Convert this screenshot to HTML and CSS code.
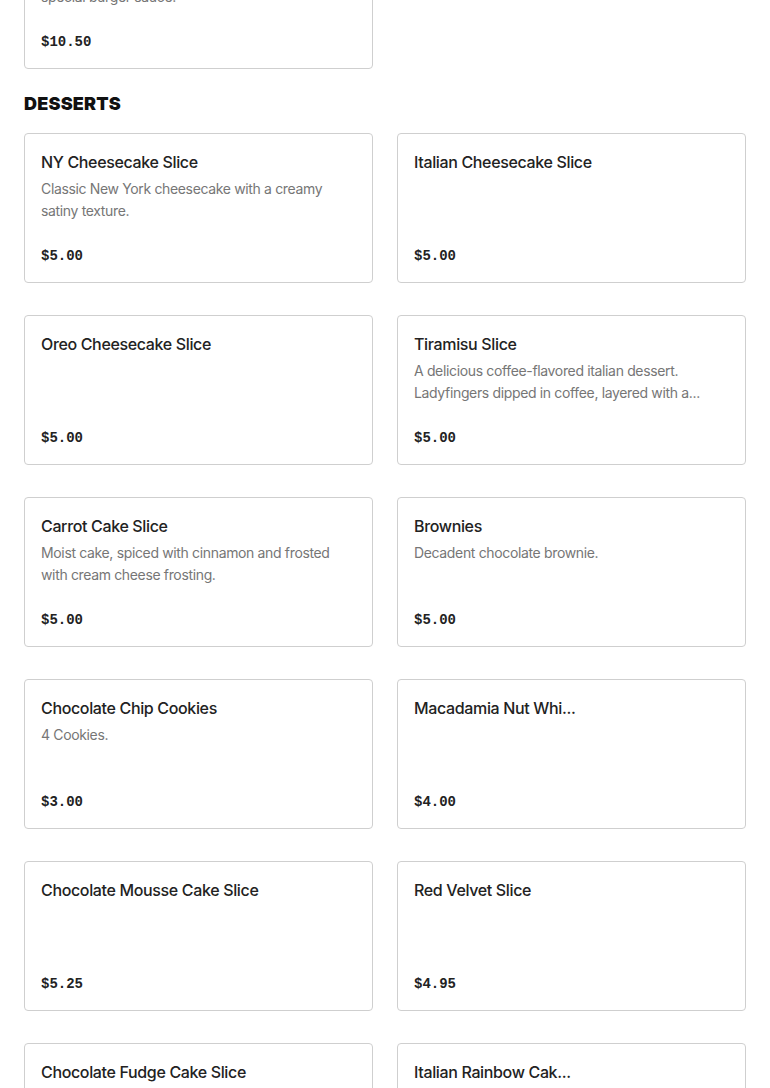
FILE: index.html
```html
<!DOCTYPE html>
<html lang="en">
<head>
<meta charset="utf-8">
<title>Menu</title>
<link rel="stylesheet" href="styles.css">
</head>
<body>
<main class="menu">
  <section class="section section-scrolled">
    <div class="grid">
      <article class="card">
        <h3 class="card-title">Classic Burger</h3>
        <p class="card-desc">Two beef patties, cheese, lettuce, pickles and special burger sauce.</p>
        <div class="card-price">$10.50</div>
      </article>
    </div>
  </section>

  <section class="section">
    <h2 class="section-title">DESSERTS</h2>
    <div class="grid">
      <article class="card">
        <h3 class="card-title">NY Cheesecake Slice</h3>
        <p class="card-desc">Classic New York cheesecake with a creamy satiny texture.</p>
        <div class="card-price">$5.00</div>
      </article>
      <article class="card">
        <h3 class="card-title">Italian Cheesecake Slice</h3>
        <p class="card-desc"></p>
        <div class="card-price">$5.00</div>
      </article>
      <article class="card">
        <h3 class="card-title">Oreo Cheesecake Slice</h3>
        <p class="card-desc"></p>
        <div class="card-price">$5.00</div>
      </article>
      <article class="card">
        <h3 class="card-title">Tiramisu Slice</h3>
        <p class="card-desc">A delicious coffee-flavored italian dessert. Ladyfingers dipped in coffee, layered with a...</p>
        <div class="card-price">$5.00</div>
      </article>
      <article class="card">
        <h3 class="card-title">Carrot Cake Slice</h3>
        <p class="card-desc">Moist cake, spiced with cinnamon and frosted with cream cheese frosting.</p>
        <div class="card-price">$5.00</div>
      </article>
      <article class="card">
        <h3 class="card-title">Brownies</h3>
        <p class="card-desc">Decadent chocolate brownie.</p>
        <div class="card-price">$5.00</div>
      </article>
      <article class="card">
        <h3 class="card-title">Chocolate Chip Cookies</h3>
        <p class="card-desc">4 Cookies.</p>
        <div class="card-price">$3.00</div>
      </article>
      <article class="card">
        <h3 class="card-title">Macadamia Nut Whi...</h3>
        <p class="card-desc"></p>
        <div class="card-price">$4.00</div>
      </article>
      <article class="card">
        <h3 class="card-title">Chocolate Mousse Cake Slice</h3>
        <p class="card-desc"></p>
        <div class="card-price">$5.25</div>
      </article>
      <article class="card">
        <h3 class="card-title">Red Velvet Slice</h3>
        <p class="card-desc"></p>
        <div class="card-price">$4.95</div>
      </article>
      <article class="card">
        <h3 class="card-title">Chocolate Fudge Cake Slice</h3>
        <p class="card-desc"></p>
        <div class="card-price">$5.00</div>
      </article>
      <article class="card">
        <h3 class="card-title">Italian Rainbow Cak...</h3>
        <p class="card-desc"></p>
        <div class="card-price">$5.00</div>
      </article>
    </div>
  </section>
</main>
</body>
</html>
```

FILE: styles.css
```css
* {
  box-sizing: border-box;
}

html, body {
  margin: 0;
  padding: 0;
  background: #ffffff;
}

body {
  font-family: Inter, "Noto Sans", "Liberation Sans", sans-serif;
  color: #222222;
  overflow: hidden;
}

.menu {
  padding: 0 24px;
}

.section-scrolled {
  margin-top: -81px;
}

.section-title {
  margin: 0 0 17px;
  padding-top: 23px;
  font-size: 18px;
  line-height: 24px;
  font-weight: 900;
  letter-spacing: 0.2px;
  color: #111111;
}

.grid {
  display: grid;
  grid-template-columns: 1fr 1fr;
  column-gap: 24px;
  row-gap: 32px;
}

.card {
  height: 150px;
  border: 1px solid #cfcfcf;
  border-radius: 4px;
  padding: 16px;
  display: flex;
  flex-direction: column;
  background: #ffffff;
}

.card-title {
  margin: 0;
  font-size: 16px;
  line-height: 24px;
  font-weight: 500;
  letter-spacing: -0.35px;
  color: #222222;
  white-space: nowrap;
  overflow: hidden;
}

.card-desc {
  margin: 4px 0 0;
  font-size: 14px;
  line-height: 22px;
  font-weight: 400;
  letter-spacing: -0.35px;
  color: #767676;
  max-height: 44px;
  overflow: hidden;
}

.card-price {
  margin-top: auto;
  font-family: "Liberation Mono", "DejaVu Sans Mono", monospace;
  font-size: 14px;
  line-height: 20px;
  font-weight: 700;
  color: #222222;
}
```
